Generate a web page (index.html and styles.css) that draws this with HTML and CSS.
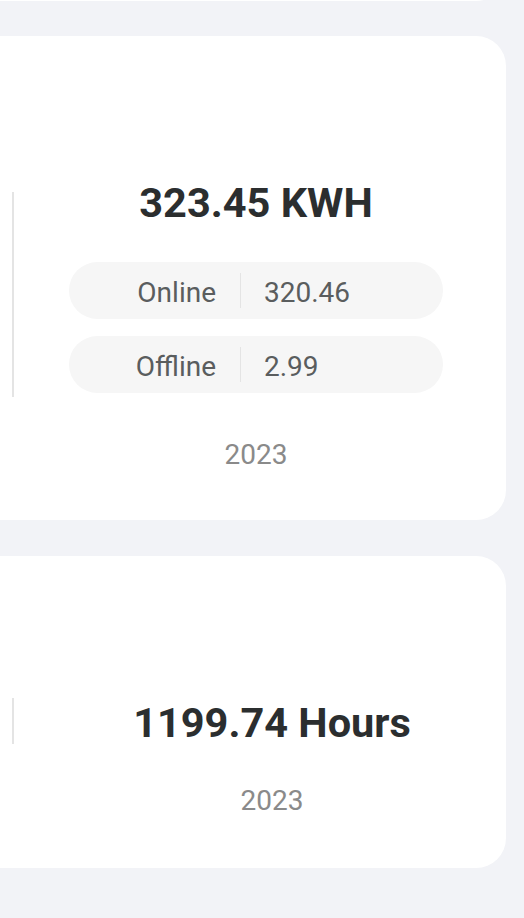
FILE: index.html
```html
<!DOCTYPE html>
<html lang="en">
<head>
<meta charset="utf-8">
<title>Stats</title>
<link rel="stylesheet" href="styles.css">
</head>
<body>
<div class="list">
  <div class="card card-prev"></div>

  <div class="card">
    <div class="axis axis-energy"></div>
    <div class="stat stat-energy">
      <div class="value">323.45 KWH</div>
      <div class="pills">
        <div class="pill">
          <span class="pill-label">Online</span>
          <span class="pill-sep"></span>
          <span class="pill-value">320.46</span>
        </div>
        <div class="pill">
          <span class="pill-label">Offline</span>
          <span class="pill-sep"></span>
          <span class="pill-value">2.99</span>
        </div>
      </div>
      <div class="year year-energy">2023</div>
    </div>
  </div>

  <div class="card">
    <div class="axis axis-hours"></div>
    <div class="stat stat-hours">
      <div class="value">1199.74 Hours</div>
      <div class="year year-hours">2023</div>
    </div>
  </div>
</div>
</body>
</html>
```
FILE: styles.css
```css
html, body {
  margin: 0;
  padding: 0;
}
body {
  background: #f2f3f7;
  font-family: Roboto, "Noto Sans", Arial, sans-serif;
  width: 524px;
  height: 918px;
  overflow: hidden;
}
.list {
  display: flex;
  flex-direction: column;
  gap: 36px;
  margin-right: 18px;
}
.card {
  background: #ffffff;
  border-radius: 0 30px 30px 0;
  display: flex;
  align-items: flex-start;
}
.card-prev {
  height: 60px;
  margin-top: -59px;
  margin-bottom: -1px;
}
.axis {
  width: 2px;
  margin-left: 12px;
  background: #e4e4e4;
  flex: 0 0 2px;
}
.axis-energy {
  margin-top: 156px;
  height: 205px;
}
.axis-hours {
  margin-top: 142px;
  height: 46px;
}
.stat {
  flex: 1;
  display: flex;
  flex-direction: column;
  align-items: center;
}
.stat-energy {
  padding: 142px 8px 48px 0;
}
.stat-hours {
  padding: 142px 0 50px 24px;
}
.value {
  font-size: 41.5px;
  line-height: 50px;
  font-weight: 700;
  color: #2b2e2f;
  white-space: nowrap;
}
.pills {
  margin-top: 34px;
  display: flex;
  flex-direction: column;
  gap: 17px;
}
.pill {
  width: 374px;
  height: 57px;
  border-radius: 29px;
  background: #f6f6f6;
  display: flex;
  align-items: center;
}
.pill-label {
  flex: 0 0 147px;
  text-align: right;
  font-size: 28px;
  line-height: 34px;
  padding-top: 4px;
  color: #5a5d5e;
}
.pill-sep {
  width: 1px;
  height: 35px;
  background: #e4e4e4;
  margin: 0 23px 0 24px;
}
.pill-value {
  font-size: 28px;
  line-height: 34px;
  padding-top: 4px;
  color: #5a5d5e;
}
.year {
  font-size: 28px;
  line-height: 34px;
  color: #8a8a8a;
}
.year-energy {
  margin-top: 45px;
}
.year-hours {
  margin-top: 36px;
}
```
